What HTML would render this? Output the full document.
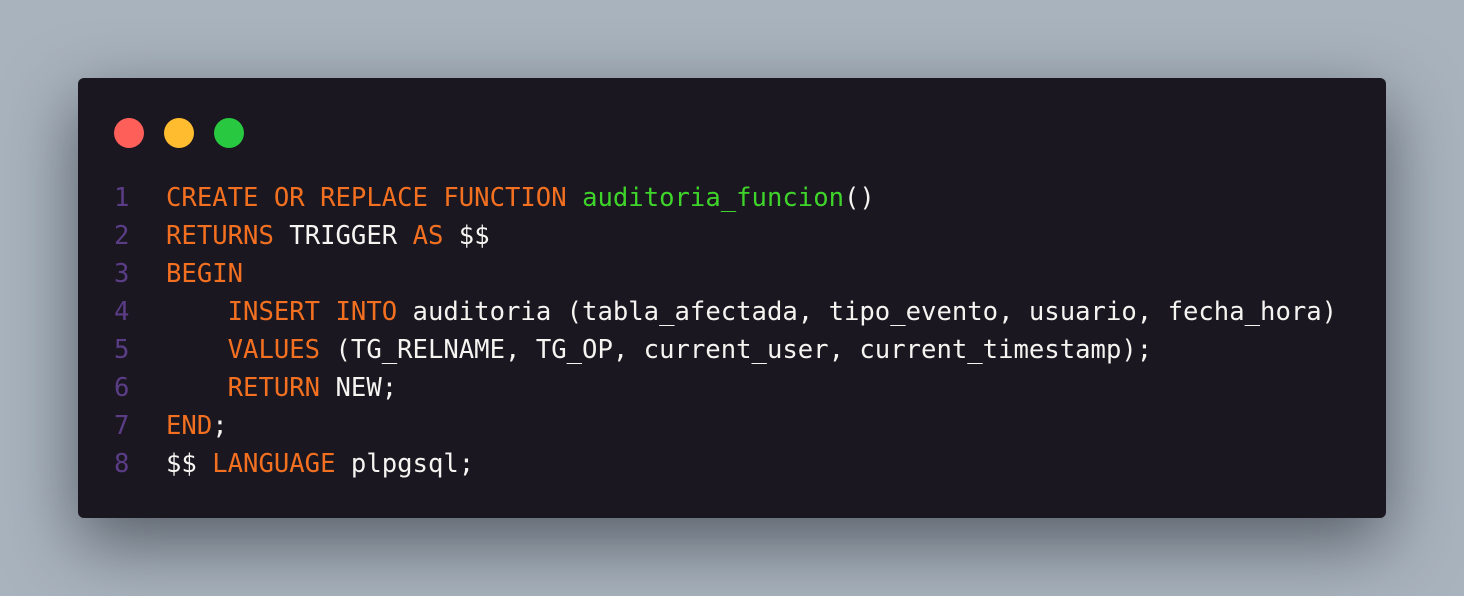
<!DOCTYPE html>
<html><head><style>
html,body{margin:0;padding:0;}
body{width:1464px;height:596px;background:#a9b3bd;position:relative;overflow:hidden;}
.card{position:absolute;left:78px;top:78px;width:1308px;height:440px;background:#1a1721;border-radius:6px;box-shadow:0 24px 70px rgba(30,35,45,0.6);}
.dot{position:absolute;top:40px;width:30px;height:30px;border-radius:50%;}
.code{position:absolute;left:36px;top:101px;font-family:"DejaVu Sans Mono","Liberation Mono",monospace;font-size:25.6px;line-height:38px;color:#f4f4f0;white-space:pre;}
.n{color:#5b3d87;display:inline-block;width:52px;}
.k{color:#f37021;}
.g{color:#3fd42a;}
</style></head><body>
<div class="card">
<div class="dot" style="left:36px;background:#fe5f58"></div>
<div class="dot" style="left:86px;background:#febc2e"></div>
<div class="dot" style="left:136px;background:#28c840"></div>
<div class="code"><span class="n">1</span><span class="k">CREATE OR REPLACE FUNCTION</span> <span class="g">auditoria_funcion</span>()
<span class="n">2</span><span class="k">RETURNS</span> TRIGGER <span class="k">AS</span> $$
<span class="n">3</span><span class="k">BEGIN</span>
<span class="n">4</span>    <span class="k">INSERT INTO</span> auditoria (tabla_afectada, tipo_evento, usuario, fecha_hora)
<span class="n">5</span>    <span class="k">VALUES</span> (TG_RELNAME, TG_OP, current_user, current_timestamp);
<span class="n">6</span>    <span class="k">RETURN</span> NEW;
<span class="n">7</span><span class="k">END</span>;
<span class="n">8</span>$$ <span class="k">LANGUAGE</span> plpgsql;</div>
</div>
</body></html>
